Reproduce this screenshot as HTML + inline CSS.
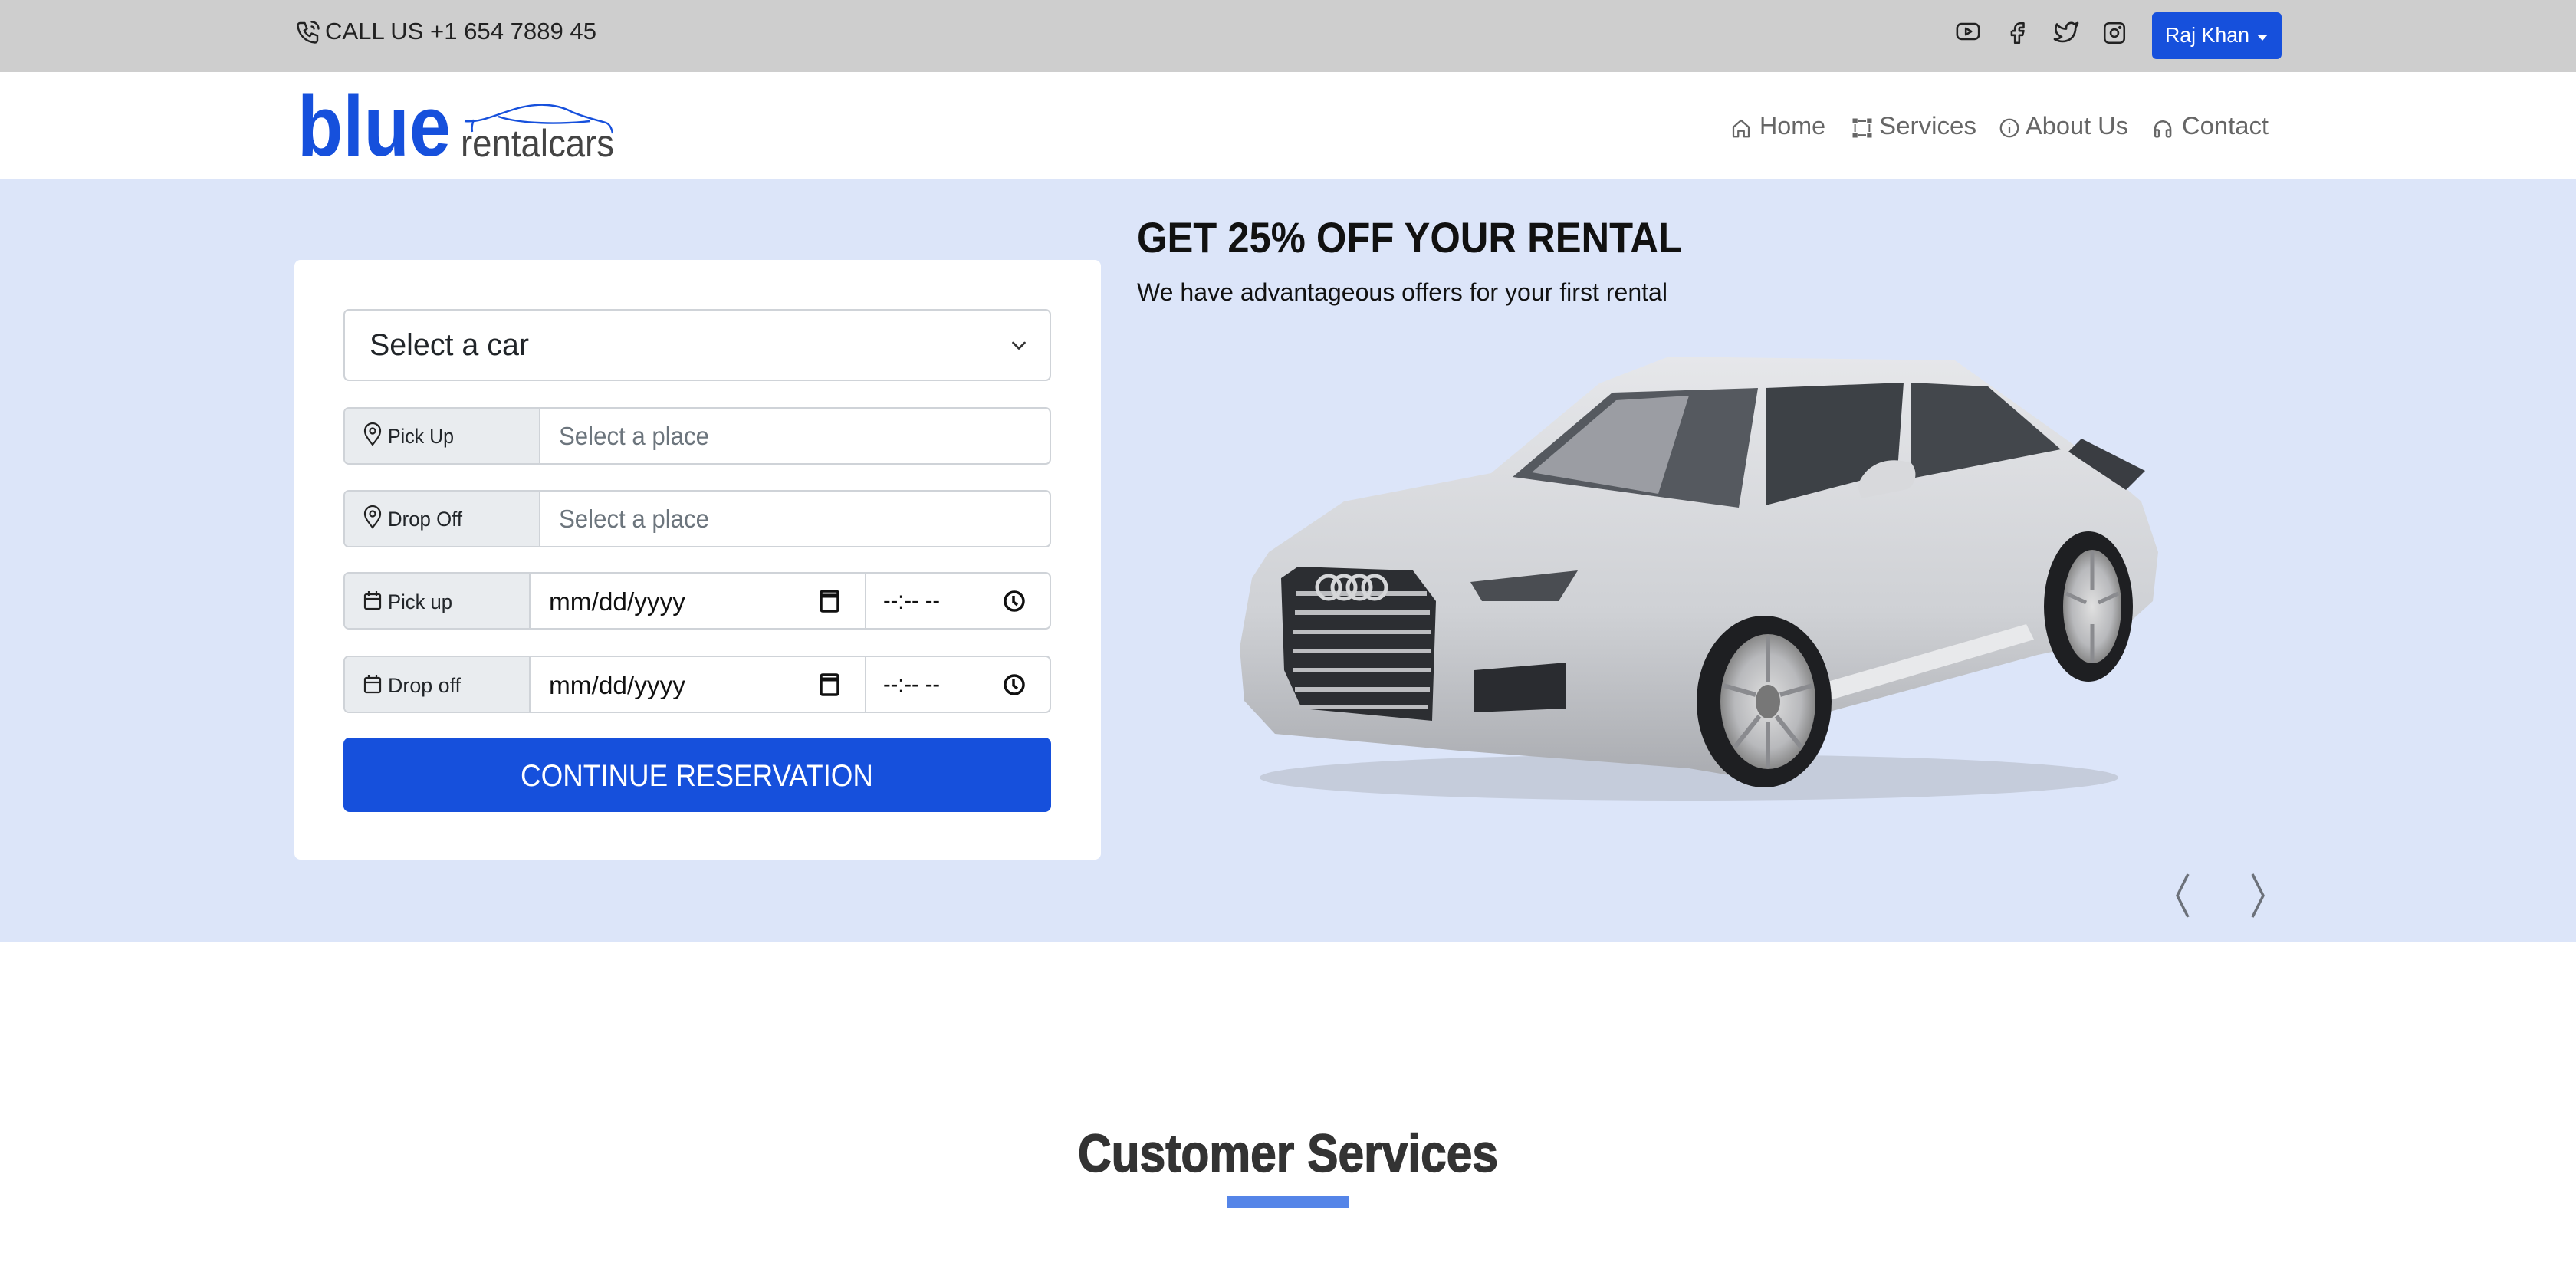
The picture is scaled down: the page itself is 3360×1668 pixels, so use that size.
<!DOCTYPE html>
<html><head><meta charset="utf-8">
<style>
*{margin:0;padding:0;box-sizing:border-box}
body{width:3360px;height:1668px;overflow:hidden;background:#fff;font-family:"Liberation Sans",Arial,sans-serif;position:relative}
.a{position:absolute}
svg.a{overflow:visible}
.top{left:0;top:0;width:3360px;height:94px;background:#cecece}
.nav{left:0;top:94px;width:3360px;height:140px;background:#fff}
.hero{left:0;top:234px;width:3360px;height:994px;background:#dce5f9}
.card{left:384px;top:339px;width:1052px;height:782px;background:#fff;border-radius:8px}
.box{border:2px solid #cfd3d8;border-radius:7px;background:#fff}
.lbl{background:#e9ecef;border-right:2px solid #cfd3d8}
.btn{left:448px;top:962px;width:923px;height:97px;background:#1650dc;border-radius:8px}
</style></head><body>
<div class="a top"></div>
<div class="a nav"></div>
<div class="a hero"></div>

<svg class="a" style="left:384px;top:24px" width="36" height="36" viewBox="0 0 24 24" fill="none" stroke="#222" stroke-width="1.6" stroke-linecap="round" stroke-linejoin="round"><path d="M5 4h4l2 5-2.5 1.5a11 11 0 0 0 5 5L15 13l5 2v4a2 2 0 0 1-2 2A16 16 0 0 1 3 6a2 2 0 0 1 2-2"/><path d="M15 7a2 2 0 0 1 2 2M15 3a6 6 0 0 1 6 6"/></svg>
<svg class="a" style="left:424px;top:16px" width="400" height="50"><text x="0" y="35" font-size="31" fill="#222" textLength="354" lengthAdjust="spacingAndGlyphs">CALL US +1 654 7889 45</text></svg>

<svg class="a" style="left:2547px;top:24px" width="40" height="34" viewBox="0 0 24 24" fill="none" stroke="#222" stroke-width="1.8" stroke-linejoin="round"><rect x="2" y="5" width="20" height="14" rx="4"/><path d="M10 9l5 3-5 3z"/></svg>
<svg class="a" style="left:2614px;top:25px" width="34" height="36" viewBox="0 0 24 24" fill="none" stroke="#222" stroke-width="1.8" stroke-linejoin="round"><path d="M7 10v4h3v7h4v-7h3l1-4h-4V8a1 1 0 0 1 1-1h3V3h-3a5 5 0 0 0-5 5v2H7"/></svg>
<svg class="a" style="left:2677px;top:24px" width="36" height="36" viewBox="0 0 24 24" fill="none" stroke="#222" stroke-width="1.8" stroke-linejoin="round"><path d="M22 4.01c-1 .49-1.98.69-3 .99-1.12-1.26-2.78-1.33-4.38-.73S11.99 6.4 12 8.01v1c-3.25.08-6.14-1.4-8-4 0 0-4.19 7.44 4 11-1.87 1.25-3.74 2.09-6 2 3.31 1.8 6.910 2.42 10.030 1.52 3.57-1.04 6.510-3.72 7.630-7.73.34-1.22.5-2.48.5-3.74 0-.25 1.51-2.770 1.84-4.06z"/></svg>
<svg class="a" style="left:2741px;top:26px" width="34" height="34" viewBox="0 0 24 24" fill="none" stroke="#222" stroke-width="1.8"><rect x="3" y="3" width="18" height="18" rx="4"/><circle cx="12" cy="12" r="3.5"/><circle cx="17" cy="7" r=".6" fill="#222"/></svg>
<div class="a" style="left:2807px;top:16px;width:169px;height:61px;background:#1650dc;border-radius:6px"></div>
<svg class="a" style="left:2824px;top:20px" width="150" height="50"><text x="0" y="35" font-size="28" fill="#fff" textLength="110" lengthAdjust="spacingAndGlyphs">Raj Khan</text><path d="M120 25h14l-7 8z" fill="#fff"/></svg>

<svg class="a" style="left:380px;top:110px" width="440" height="110">
<text x="8" y="93" font-size="112" font-weight="bold" fill="#1650dc" textLength="200" lengthAdjust="spacingAndGlyphs">blue</text>
<text x="221" y="94" font-size="50" fill="#444" textLength="200" lengthAdjust="spacingAndGlyphs">rentalcars</text>
<path d="M226 48c20 2 40-8 60-14 30-10 58-10 80 2 14 6 30 10 44 14 6 2 8 8 9 14M238 46c-2 6-3 10-2 16M270 42c30 10 80 10 120 6" fill="none" stroke="#1650dc" stroke-width="2.4"/>
</svg>

<svg class="a" style="left:2255px;top:152px" width="32" height="30" viewBox="0 0 24 24" fill="none" stroke="#666" stroke-width="1.8" stroke-linejoin="round"><path d="M4 11l8-7 8 7v10h-5v-6h-6v6H4z"/></svg>
<svg class="a" style="left:2295px;top:138px" width="100" height="50"><text x="0" y="37" font-size="32" fill="#666" textLength="86" lengthAdjust="spacingAndGlyphs">Home</text></svg>
<svg class="a" style="left:2414px;top:152px" width="30" height="30" viewBox="0 0 24 24" fill="#666"><rect x="2" y="2" width="5" height="5"/><rect x="17" y="2" width="5" height="5"/><rect x="2" y="17" width="5" height="5"/><rect x="17" y="17" width="5" height="5"/><rect x="8" y="4" width="8" height="1.6"/><rect x="8" y="18.5" width="8" height="1.6"/><rect x="3.7" y="8" width="1.6" height="8"/><rect x="18.7" y="8" width="1.6" height="8"/></svg>
<svg class="a" style="left:2451px;top:138px" width="140" height="50"><text x="0" y="37" font-size="32" fill="#666" textLength="127" lengthAdjust="spacingAndGlyphs">Services</text></svg>
<svg class="a" style="left:2606px;top:152px" width="30" height="30" viewBox="0 0 24 24" fill="none" stroke="#666" stroke-width="1.8"><circle cx="12" cy="12" r="9"/><path d="M12 11v6M12 7.5v.5"/></svg>
<svg class="a" style="left:2642px;top:138px" width="140" height="50"><text x="0" y="37" font-size="32" fill="#666" textLength="134" lengthAdjust="spacingAndGlyphs">About Us</text></svg>
<svg class="a" style="left:2806px;top:152px" width="30" height="30" viewBox="0 0 24 24" fill="none" stroke="#666" stroke-width="2"><path d="M4 19v-6a8 8 0 0 1 16 0v6"/><rect x="4" y="14" width="4" height="7" rx="1"/><rect x="16" y="14" width="4" height="7" rx="1"/></svg>
<svg class="a" style="left:2846px;top:138px" width="130" height="50"><text x="0" y="37" font-size="32" fill="#666" textLength="113" lengthAdjust="spacingAndGlyphs">Contact</text></svg>

<div class="a card"></div>
<div class="a box" style="left:448px;top:403px;width:923px;height:94px"></div>
<svg class="a" style="left:482px;top:421px" width="300" height="60"><text x="0" y="42" font-size="40" fill="#212529" textLength="208" lengthAdjust="spacingAndGlyphs">Select a car</text></svg>
<svg class="a" style="left:1316px;top:438px" width="26" height="24" viewBox="0 0 16 16" fill="none" stroke="#333" stroke-width="1.8" stroke-linecap="round" stroke-linejoin="round"><path d="M3 6l5 5 5-5"/></svg>

<div class="a box" style="left:448px;top:531px;width:923px;height:75px"></div>
<div class="a lbl" style="left:450px;top:533px;width:255px;height:71px;border-radius:5px 0 0 5px"></div>
<div class="a box" style="left:448px;top:639px;width:923px;height:75px"></div>
<div class="a lbl" style="left:450px;top:641px;width:255px;height:71px;border-radius:5px 0 0 5px"></div>
<div class="a box" style="left:448px;top:746px;width:923px;height:75px"></div>
<div class="a lbl" style="left:450px;top:748px;width:242px;height:71px;border-radius:5px 0 0 5px"></div>
<div class="a" style="left:1128px;top:748px;width:2px;height:71px;background:#cfd3d8"></div>
<div class="a box" style="left:448px;top:855px;width:923px;height:75px"></div>
<div class="a lbl" style="left:450px;top:857px;width:242px;height:71px;border-radius:5px 0 0 5px"></div>
<div class="a" style="left:1128px;top:857px;width:2px;height:71px;background:#cfd3d8"></div>

<svg class="a" style="left:0;top:0" width="1440" height="960">
<g fill="none" stroke="#222" stroke-width="2.2">
<path d="M486 580c-7-9-10-13-10-18a10 10 0 0 1 20 0c0 5-3 9-10 18z"/><circle cx="486" cy="562" r="3.5"/>
<path d="M486 688c-7-9-10-13-10-18a10 10 0 0 1 20 0c0 5-3 9-10 18z"/><circle cx="486" cy="670" r="3.5"/>
<rect x="476" y="775" width="20" height="19" rx="2"/><path d="M476 781h20M481 771v6M491 771v6"/>
<rect x="476" y="884" width="20" height="19" rx="2"/><path d="M476 890h20M481 880v6M491 880v6"/>
</g>
<g font-size="27" fill="#212529">
<text x="506" y="578" textLength="86" lengthAdjust="spacingAndGlyphs">Pick Up</text>
<text x="506" y="686" textLength="97" lengthAdjust="spacingAndGlyphs">Drop Off</text>
<text x="506" y="794" textLength="84" lengthAdjust="spacingAndGlyphs">Pick up</text>
<text x="506" y="903" textLength="95" lengthAdjust="spacingAndGlyphs">Drop off</text>
</g>
<g font-size="33" fill="#6c757d">
<text x="729" y="580" textLength="196" lengthAdjust="spacingAndGlyphs">Select a place</text>
<text x="729" y="688" textLength="196" lengthAdjust="spacingAndGlyphs">Select a place</text>
</g>
<g font-size="33" fill="#111">
<text x="716" y="796" textLength="178" lengthAdjust="spacingAndGlyphs">mm/dd/yyyy</text>
<text x="716" y="905" textLength="178" lengthAdjust="spacingAndGlyphs">mm/dd/yyyy</text>
<text x="1152" y="794" textLength="74" lengthAdjust="spacingAndGlyphs">--:-- --</text>
<text x="1152" y="903" textLength="74" lengthAdjust="spacingAndGlyphs">--:-- --</text>
</g>
<g fill="none" stroke="#111" stroke-width="3.5">
<rect x="1071" y="771" width="22" height="26" rx="2"/><path d="M1071 777h22" stroke-width="5"/>
<rect x="1071" y="880" width="22" height="26" rx="2"/><path d="M1071 886h22" stroke-width="5"/>
<circle cx="1323" cy="784" r="12"/><path d="M1322 777v8l5 4"/>
<circle cx="1323" cy="893" r="12"/><path d="M1322 886v8l5 4"/>
</g>
</svg>

<div class="a btn"></div>
<svg class="a" style="left:448px;top:962px" width="923" height="97"><text x="461" y="63" text-anchor="middle" font-size="40" fill="#fff" textLength="460" lengthAdjust="spacingAndGlyphs">CONTINUE RESERVATION</text></svg>

<svg class="a" style="left:1480px;top:260px" width="800" height="150">
<text x="3" y="69" font-size="56" font-weight="bold" fill="#111" textLength="711" lengthAdjust="spacingAndGlyphs">GET 25% OFF YOUR RENTAL</text>
<text x="3" y="132" font-size="32" fill="#111" textLength="692" lengthAdjust="spacingAndGlyphs">We have advantageous offers for your first rental</text>
</svg>

<svg class="a" style="left:1603px;top:454px" width="1215" height="600" viewBox="0 0 1215 600">
<defs>
<linearGradient id="bd" x1="0" y1="0" x2="0" y2="1"><stop offset="0" stop-color="#e6e7ea"/><stop offset=".6" stop-color="#cfd1d5"/><stop offset="1" stop-color="#a9abb0"/></linearGradient>
<radialGradient id="rim"><stop offset="0" stop-color="#e0e0e0"/><stop offset=".7" stop-color="#b8b9bc"/><stop offset="1" stop-color="#888"/></radialGradient>
</defs>
<ellipse cx="600" cy="560" rx="560" ry="30" fill="#aeb3bd" opacity=".5"/>
<path d="M14 391L30 300 52 266 150 200 342 163 483 46 574 11 947 16 1113 134 1190 200 1212 266 1205 330 1150 380 1055 400 780 475 700 565 600 548 300 525 60 503 20 460z" fill="url(#bd)"/>
<path d="M370 168L500 58 690 52 665 208z" fill="#55595f"/>
<path d="M395 162L505 68 600 62 560 190z" fill="#c9ccd1" opacity=".6"/>
<path d="M700 52L880 45 872 160 700 205z" fill="#3d4146"/>
<path d="M890 45L990 50 1085 132 890 170z" fill="#43474c"/>
<path d="M1095 135L1170 185 1195 160 1112 118z" fill="#3a3d42"/>
<path d="M820 180c10-30 40-40 70-30 10 12 5 28-5 34l-60 12z" fill="#d8d9dc"/>
<path d="M68 300L90 285 240 290 270 330 265 486 150 475 95 470 72 420z" fill="#2c2e32"/>
<g stroke="#bcbdc0" stroke-width="6">
<path d="M88 320h170M86 345h176M84 370h180M84 395h180M84 420h180M86 445h176M90 468h170"/>
</g>
<g fill="none" stroke="#d5d6d8" stroke-width="5"><circle cx="130" cy="312" r="15"/><circle cx="150" cy="312" r="15"/><circle cx="170" cy="312" r="15"/><circle cx="190" cy="312" r="15"/></g>
<path d="M315 305L455 290 430 330 330 330z" fill="#4a4d52"/>
<path d="M320 420L440 410 440 470 320 475z" fill="#2a2c30"/>
<path d="M660 470L1040 360 1050 380 680 490z" fill="#e8e9eb"/>
<ellipse cx="698" cy="461" rx="88" ry="112" fill="#1e1f22"/>
<ellipse cx="703" cy="461" rx="62" ry="88" fill="url(#rim)"/>
<ellipse cx="703" cy="461" rx="16" ry="22" fill="#777"/>
<g stroke="#8a8b8f" stroke-width="6"><path d="M703 375v60M703 487v60M645 440l42 12M761 440l-42 12M660 520l32-40M746 520l-32-40"/></g>
<ellipse cx="1121" cy="337" rx="58" ry="98" fill="#1e1f22"/>
<ellipse cx="1126" cy="337" rx="38" ry="74" fill="url(#rim)"/>
<g stroke="#8a8b8f" stroke-width="5"><path d="M1126 265v50M1126 360v50M1092 320l26 12M1160 320l-26 12"/></g>
</svg>

<svg class="a" style="left:2826px;top:1136px" width="140" height="64" fill="none" stroke="#6c717a" stroke-width="3.5"><path d="M28 4L14 32 28 60M112 4L126 32 112 60"/></svg>

<svg class="a" style="left:1380px;top:1450px" width="600" height="100"><text x="300" y="78" text-anchor="middle" font-size="70" font-weight="bold" fill="#333" stroke="#333" stroke-width="1.5" textLength="548" lengthAdjust="spacingAndGlyphs">Customer Services</text></svg>
<div class="a" style="left:1601px;top:1560px;width:158px;height:15px;background:#5585e8"></div>
</body></html>
